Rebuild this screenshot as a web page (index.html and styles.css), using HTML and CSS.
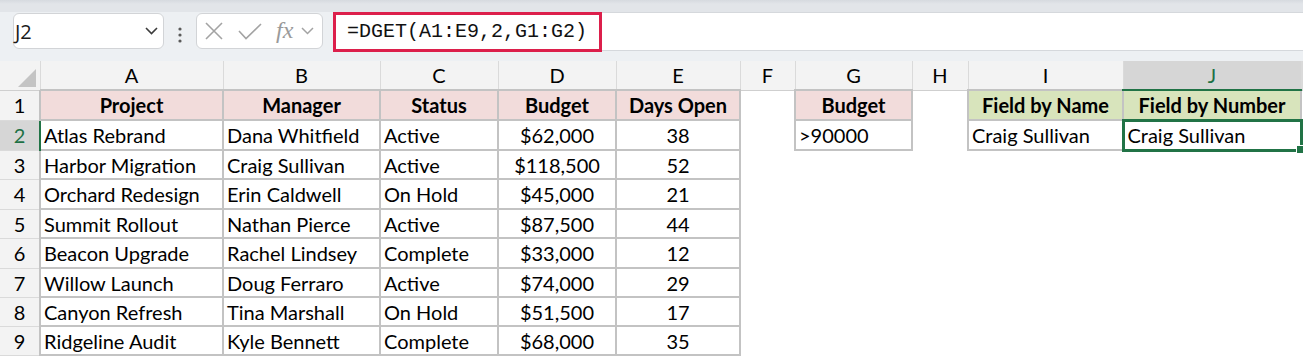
FILE: index.html
```html
<!DOCTYPE html>
<html>
  <head>
    <meta charset="UTF-8">
    <title>DGET Example</title>
    <link rel="stylesheet" href="styles.css">
  </head>
  <body>
    <div class="toolbar">
      <div class="name-box">
        <span>J2</span>
        <svg width="13" height="8" viewBox="0 0 13 8"><polyline points="1,1 6.5,6.5 12,1" fill="none" stroke="#3c3c3c" stroke-width="1.6"/></svg>
      </div>
      <svg class="dots" width="6" height="16" viewBox="0 0 6 16"><circle cx="3" cy="2" r="1.6" fill="#5a5a5a"/><circle cx="3" cy="8" r="1.6" fill="#5a5a5a"/><circle cx="3" cy="14" r="1.6" fill="#5a5a5a"/></svg>
      <div class="fx-box">
        <svg class="ic-x" width="18" height="18" viewBox="0 0 18 18"><path d="M1 1 L17 17 M17 1 L1 17" stroke="#a3a3a3" stroke-width="1.6" fill="none"/></svg>
        <svg class="ic-ok" width="24" height="17" viewBox="0 0 24 17"><polyline points="1,8 8,15.5 23,1" fill="none" stroke="#a3a3a3" stroke-width="1.6"/></svg>
        <i class="fx">fx</i>
        <svg class="ic-down" width="13" height="8" viewBox="0 0 13 8"><polyline points="1,1 6.5,6.5 12,1" fill="none" stroke="#a3a3a3" stroke-width="1.5"/></svg>
      </div>
      <div class="formula-bar">
        <div class="formula">=DGET(A1:E9,2,G1:G2)</div>
      </div>
    </div>

    <table class="sheet">
      <colgroup>
        <col style="width:40px"><col style="width:183px"><col style="width:157px"><col style="width:118px">
        <col style="width:118px"><col style="width:124px"><col style="width:55px"><col style="width:117px">
        <col style="width:56px"><col style="width:155px"><col style="width:178px"><col>
      </colgroup>
      <tr class="col-heads">
        <th class="corner"><span class="tri"></span></th>
        <th>A</th><th>B</th><th>C</th><th>D</th><th>E</th><th>F</th><th>G</th><th>H</th><th>I</th><th class="sel">J</th><th></th>
      </tr>
      <tr class="r1">
        <th class="rh">1</th>
        <td class="hd pink">Project</td><td class="hd pink">Manager</td><td class="hd pink">Status</td><td class="hd pink">Budget</td><td class="hd pink">Days Open</td>
        <td class="blank"></td><td class="hd pink">Budget</td><td class="blank"></td>
        <td class="hd green">Field by Name</td><td class="hd green">Field by Number</td><td class="blank"></td>
      </tr>
      <tr class="r2">
        <th class="rh sel">2</th>
        <td>Atlas Rebrand</td><td>Dana Whitfield</td><td>Active</td><td class="c">$62,000</td><td class="c">38</td>
        <td class="blank"></td><td>&gt;90000</td><td class="blank"></td>
        <td>Craig Sullivan</td><td class="active">Craig Sullivan<span class="handle"></span></td><td class="blank"></td>
      </tr>
      <tr class="r3">
        <th class="rh">3</th>
        <td>Harbor Migration</td><td>Craig Sullivan</td><td>Active</td><td class="c">$118,500</td><td class="c">52</td><td class="blank" colspan="6"></td>
      </tr>
      <tr class="r4">
        <th class="rh">4</th>
        <td>Orchard Redesign</td><td>Erin Caldwell</td><td>On Hold</td><td class="c">$45,000</td><td class="c">21</td><td class="blank" colspan="6"></td>
      </tr>
      <tr class="r5">
        <th class="rh">5</th>
        <td>Summit Rollout</td><td>Nathan Pierce</td><td>Active</td><td class="c">$87,500</td><td class="c">44</td><td class="blank" colspan="6"></td>
      </tr>
      <tr class="r6">
        <th class="rh">6</th>
        <td>Beacon Upgrade</td><td>Rachel Lindsey</td><td>Complete</td><td class="c">$33,000</td><td class="c">12</td><td class="blank" colspan="6"></td>
      </tr>
      <tr class="r7">
        <th class="rh">7</th>
        <td>Willow Launch</td><td>Doug Ferraro</td><td>Active</td><td class="c">$74,000</td><td class="c">29</td><td class="blank" colspan="6"></td>
      </tr>
      <tr class="r8">
        <th class="rh">8</th>
        <td>Canyon Refresh</td><td>Tina Marshall</td><td>On Hold</td><td class="c">$51,500</td><td class="c">17</td><td class="blank" colspan="6"></td>
      </tr>
      <tr class="r9">
        <th class="rh">9</th>
        <td>Ridgeline Audit</td><td>Kyle Bennett</td><td>Complete</td><td class="c">$68,000</td><td class="c">35</td><td class="blank" colspan="6"></td>
      </tr>
    </table>
  </body>
</html>
```

FILE: styles.css
```css
body {
  margin: 0;
  background: #fff;
  font-family: Lato, "Open Sans", sans-serif;
  overflow: hidden;
}
.toolbar {
  height: 61px;
  box-sizing: border-box;
  padding-top: 12px;
  display: flex;
  align-items: flex-start;
  background: linear-gradient(#d6dadf 0, #e2e5e9 4px, #e2e5e9 12px, #edf0f3 12px);
}
.name-box {
  margin: 1px 0 0 13px;
  width: 151px;
  height: 36px;
  box-sizing: border-box;
  background: #fff;
  border: 1px solid #d2d4d7;
  border-radius: 6px;
  display: flex;
  align-items: center;
  justify-content: space-between;
  padding: 0 5px 0 1px;
  font-family: "Open Sans", sans-serif;
  font-size: 20px;
  color: #1a1a1a;
}
.dots {
  margin: 15px 0 0 13px;
}
.fx-box {
  margin: 1px 0 0 13px;
  width: 127px;
  height: 36px;
  box-sizing: border-box;
  background: #fff;
  border: 1px solid #d2d4d7;
  border-radius: 6px;
  display: flex;
  align-items: center;
  padding-left: 8px;
}
.ic-ok {
  margin-left: 15px;
}
.fx {
  margin-left: 14px;
  font-family: "Liberation Serif", serif;
  font-size: 24px;
  color: #9a9a9a;
  line-height: 1;
  margin-top: -3px;
}
.ic-down {
  margin-left: 8px;
}
.formula-bar {
  flex: 1;
  margin-left: 10px;
  height: 37px;
  background: #fff;
  border-top: 1px solid #d5d8dc;
  border-bottom: 1px solid #d5d8dc;
  border-left: 1px solid #d5d8dc;
  border-radius: 6px 0 0 6px;
  position: relative;
}
.formula {
  position: absolute;
  left: -1px;
  top: -1px;
  width: 269px;
  height: 40px;
  box-sizing: border-box;
  border: 3px solid #dc1f4b;
  padding-left: 11px;
  font-family: "Liberation Mono", monospace;
  font-size: 20px;
  line-height: 34px;
  color: #111;
}
.sheet {
  border-collapse: collapse;
  table-layout: fixed;
  width: 1303px;
  font-size: 20px;
  color: #000;
}
.sheet th, .sheet td {
  padding: 0;
  white-space: nowrap;
  overflow: hidden;
}
.col-heads th {
  height: 28px;
  background: #f3f3f3;
  border-right: 1px solid #dadada;
  border-bottom: 1px solid #cfcfcf;
  font-weight: normal;
  text-align: center;
}
.col-heads th.sel {
  background: #d6d6d6;
  color: #1e7145;
  border-bottom: 2px solid #217346;
}
.corner {
  position: relative;
}
.tri {
  position: absolute;
  right: 4px;
  bottom: 3px;
  width: 0;
  height: 0;
  border-left: 18px solid transparent;
  border-bottom: 18px solid #c4c4c4;
}
.rh {
  background: #f3f3f3;
  border-right: 1px solid #cfcfcf;
  border-bottom: 1px solid #dadada;
  font-weight: normal;
  text-align: center;
}
.rh.sel {
  background: #d6d6d6;
  color: #1e7145;
  border-right: 2px solid #217346;
}
.r1 { height: 30px; }
.r2 { height: 30px; }
.r3 { height: 29px; }
.r4 { height: 30px; }
.r5 { height: 29px; }
.r6 { height: 30px; }
.r7 { height: 29px; }
.r8 { height: 29px; }
.r9 { height: 29px; }
.sheet td {
  border: 2px solid #c3c3c3;
  padding-left: 3px;
}
.sheet td.blank {
  border: none;
  border-left: 2px solid #c3c3c3;
}
.sheet td.c {
  text-align: center;
  padding-left: 0;
}
.sheet td.hd {
  font-weight: bold;
  text-align: center;
  padding-left: 0;
}
.pink {
  background: #f2dcdb;
}
.green {
  background: #d8e4bc;
}
.sheet td.active {
  border: 3px solid #217346;
  position: relative;
  overflow: visible;
}
.handle {
  position: absolute;
  right: -5px;
  bottom: -5px;
  width: 7px;
  height: 7px;
  background: #217346;
  border: 1px solid #fff;
}
```
